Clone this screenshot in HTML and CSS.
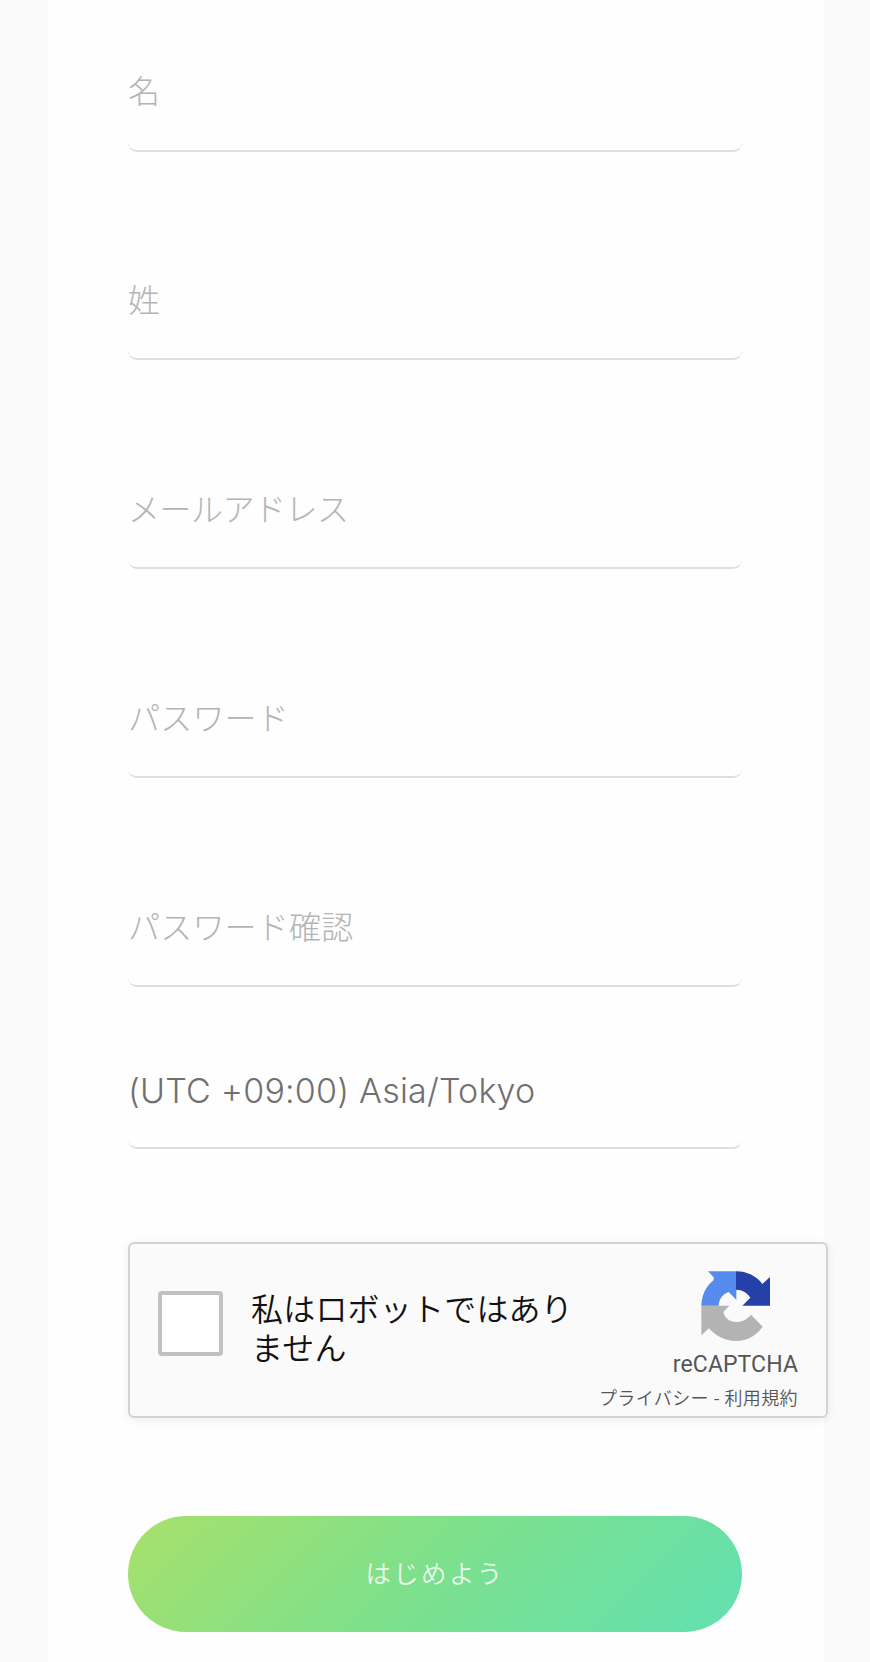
FILE: index.html
```html
<!DOCTYPE html>
<html lang="ja">
<head>
    <meta charset="UTF-8">
    <meta name="viewport" content="width=device-width, initial-scale=1.0">
    <title>はじめよう</title>
    <link rel="stylesheet" href="styles.css">
</head>
<body>
    <form class="signup">
        <input class="field" type="text" placeholder="名">
        <input class="field" type="text" placeholder="姓">
        <input class="field kana" type="email" placeholder="メールアドレス">
        <input class="field" type="password" placeholder="パスワード">
        <input class="field" type="password" placeholder="パスワード確認">
        <select class="field timezone">
            <option selected>(UTC +09:00) Asia/Tokyo</option>
        </select>

        <div class="captcha">
            <span class="captcha-box"></span>
            <p class="captcha-label">私はロボットではありません</p>
            <div class="captcha-brand">
                <svg class="captcha-logo" viewBox="0 0 210 210">
                    <path fill="#b3b3b3" d="M1 104H85L67 123C72 142 86 153 105 153C123 153 139 145 150 131L185 167C166 194 138 210 105 210C73 210 44 196 24 172L1 193Z"/>
                    <path fill="#568bee" d="M21 1H106V86L83 63C65 69 54 84 53 104H1C2 72 15 45 38 27V19Z"/>
                    <path fill="#2540a6" d="M105 1C138 1 166 15 184 39L207 18V104H124L148 80C139 65 124 56 105 56Z"/>
                </svg>
                <div class="captcha-name">reCAPTCHA</div>
                <div class="captcha-links">プライバシー - 利用規約</div>
            </div>
        </div>

        <button class="submit" type="button">はじめよう</button>
    </form>
</body>
</html>
```
FILE: styles.css
```css
* {
    box-sizing: border-box;
}
body {
    margin: 0;
    background-color: #fafafa;
    font-family: "Noto Sans CJK JP", sans-serif;
}
.signup {
    display: flex;
    flex-direction: column;
    width: 776px;
    height: 1662px;
    margin-left: 48px;
    padding: 31.5px 82px 0 80px;
    background-color: #fefefe;
}
.field {
    flex: none;
    width: 100%;
    height: 120px;
    margin: 0 0 88.9px;
    padding: 0 0 3px;
    border: 0;
    border-bottom: 2px solid #dedede;
    border-radius: 9px;
    background: transparent;
    font-family: "Noto Sans CJK JP", sans-serif;
    font-size: 32px;
    font-weight: 300;
    letter-spacing: 0.2px;
    outline: none;
}
.field::placeholder {
    color: #b4b4b4;
    opacity: 1;
}
.kana {
    letter-spacing: -0.5px;
}
.timezone {
    height: 118px;
    margin: -45px 0 93px;
    padding: 3px 0 0;
    appearance: none;
    color: #707070;
    font-family: Inter, sans-serif;
    font-size: 34px;
    letter-spacing: 0.2px;
}

/* reCAPTCHA */
.captcha {
    display: flex;
    flex: none;
    width: 700px;
    height: 176px;
    padding: 0 28px;
    border: 2px solid #d3d3d3;
    border-radius: 6px;
    background-color: #fafafa;
    box-shadow: 0 2px 8px 1px rgba(0, 0, 0, 0.06);
}
.captcha-box {
    width: 65px;
    height: 65px;
    margin-top: 47px;
    border: 4px solid #c1c1c1;
    border-radius: 4px;
    background-color: #fff;
}
.captcha-label {
    width: 330px;
    margin: 44px 0 0 28px;
    color: #111;
    font-size: 32px;
    font-weight: 350;
    line-height: 39px;
    letter-spacing: 0.2px;
}
.captcha-brand {
    display: flex;
    flex-direction: column;
    align-items: flex-end;
    margin-left: auto;
    color: #555;
    white-space: nowrap;
}
.captcha-logo {
    width: 70px;
    height: 70px;
    margin: 27px 27px 0 0;
}
.captcha-name {
    margin-top: 9px;
    font-family: Roboto, sans-serif;
    font-size: 23px;
    line-height: 30px;
    letter-spacing: 0.1px;
}
.captcha-links {
    margin-top: 4px;
    font-size: 18px;
    font-weight: 350;
    line-height: 26px;
    letter-spacing: 0.4px;
}

.submit {
    flex: none;
    width: 100%;
    height: 116px;
    margin-top: 98.5px;
    padding: 0 0 6px;
    border: none;
    border-radius: 58px;
    background: linear-gradient(135deg, #a8e06b, #7ce08d 50%, #62e0b2);
    color: rgba(255, 255, 255, 0.85);
    font-family: "Noto Sans CJK JP", sans-serif;
    font-size: 25.5px;
    font-weight: 350;
    letter-spacing: 2.3px;
}
```
